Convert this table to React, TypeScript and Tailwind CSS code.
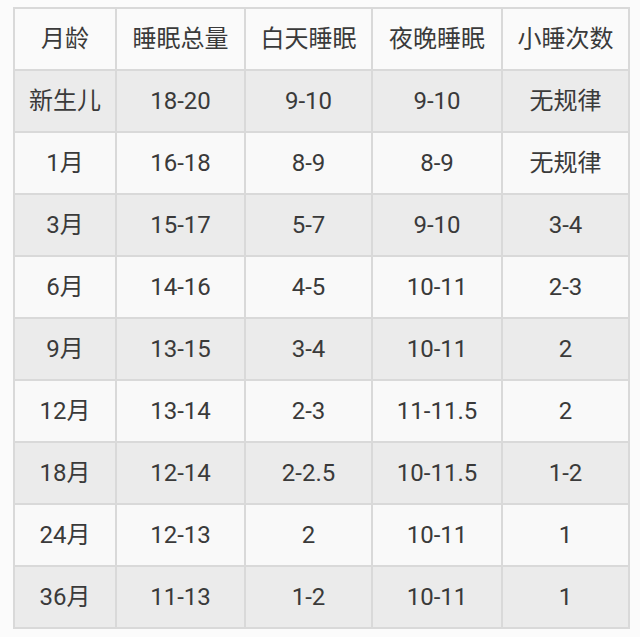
import React from "react";

const header = ["月龄", "睡眠总量", "白天睡眠", "夜晚睡眠", "小睡次数"];
const rows = [
  ["新生儿", "18-20", "9-10", "9-10", "无规律"],
  ["1月", "16-18", "8-9", "8-9", "无规律"],
  ["3月", "15-17", "5-7", "9-10", "3-4"],
  ["6月", "14-16", "4-5", "10-11", "2-3"],
  ["9月", "13-15", "3-4", "10-11", "2"],
  ["12月", "13-14", "2-3", "11-11.5", "2"],
  ["18月", "12-14", "2-2.5", "10-11.5", "1-2"],
  ["24月", "12-13", "2", "10-11", "1"],
  ["36月", "11-13", "1-2", "10-11", "1"],
];

export default function App() {
  return (
    <div
      className="w-[640px] h-[637px] bg-[#fbfbfb] pt-[7px] pl-[13px] overflow-hidden"
      style={{ fontFamily: '"Roboto", "Noto Sans CJK SC", sans-serif' }}
    >
      <div className="w-[617px] grid grid-cols-[100px_127px_125px_128px_125px] gap-[2px] p-[2px] bg-[#d9d9d9] text-[#3a3a3a] text-[24px]">
        {header.map((h) => (
          <div key={h} className="h-[60px] bg-[#fafafa] flex items-center justify-center">
            {h}
          </div>
        ))}
        {rows.map((r, i) =>
          r.map((c, j) => (
            <div
              key={i + "-" + j}
              className={
                "h-[60px] flex items-center justify-center " +
                (i % 2 === 0 ? "bg-[#ebebeb]" : "bg-[#f9f9f9]")
              }
            >
              {c}
            </div>
          ))
        )}
      </div>
    </div>
  );
}
